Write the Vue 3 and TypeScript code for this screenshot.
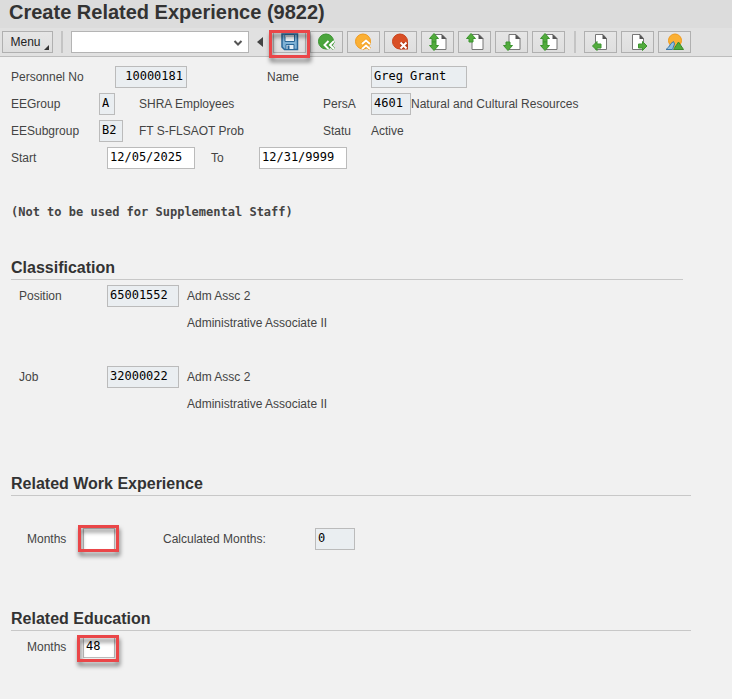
<script setup lang="ts">
import { ref } from 'vue'

interface Tool {
  id: string
  label: string
}

const navTools: Tool[] = [
  { id: 'back', label: 'Back' },
  { id: 'exit', label: 'Exit' },
  { id: 'cancel', label: 'Cancel' },
  { id: 'first', label: 'First page' },
  { id: 'prev', label: 'Previous page' },
  { id: 'next', label: 'Next page' },
  { id: 'last', label: 'Last page' },
]
const recordTools: Tool[] = [
  { id: 'pagePrev', label: 'Previous record' },
  { id: 'pageNext', label: 'Next record' },
  { id: 'overview', label: 'Overview' },
]

const command = ref('')
const startDate = ref('12/05/2025')
const endDate = ref('12/31/9999')
const workMonths = ref('')
const educationMonths = ref('48')

const upArrow = 'M6 1.500 L10.500 6.500 H8 V10 H4 V6.500 H1.500 Z'
const downArrow = 'M6 18.500 L10.500 13.500 H8 V10 H4 V13.500 H1.500 Z'
</script>

<template>
  <div class="screen">
    <header>
      <h1>Create Related Experience (9822)</h1>
      <div class="toolbar">
        <button class="menu" type="button">Menu</button>
        <span class="divider"></span>
        <div class="command">
          <select v-model="command" aria-label="Command">
            <option value=""></option>
          </select>
          <svg class="chevron" viewBox="0 0 10 8"><path d="M1.500 2 L5 5.500 L8.500 2" /></svg>
        </div>
        <button class="collapse" type="button" aria-label="Hide command field">
          <svg viewBox="0 0 6 10"><path d="M6 0 V10 L0 5 Z" /></svg>
        </button>
        <div class="tools">
          <span class="marked marked-tool">
            <button class="tool" type="button" aria-label="Save">
              <svg viewBox="0 0 20 20">
                <path d="M2 2 H17.500 V17.500 H4.500 L2 15 Z" fill="#7fb2d6" stroke="#2a6798" stroke-width="1.500" />
                <path d="M5 2.500 H14.500 V9.500 H5 Z" fill="#f2f7fa" stroke="#2a6798" />
                <path d="M5.500 3 H14 V5 H5.500 Z" fill="#c3ccd3" />
                <path d="M6 12.500 H14 V17.500 H6 Z" fill="#e6f0f7" stroke="#2a6798" />
                <path d="M7.500 13.500 H9.500 V17 H7.500 Z" fill="#2a6798" />
              </svg>
            </button>
          </span>
          <button v-for="tool in navTools" :key="tool.id" class="tool" type="button" :aria-label="tool.label">
            <svg viewBox="0 0 20 20">
              <template v-if="tool.id === 'back'">
                <circle cx="9" cy="9.500" r="7.500" fill="#4aa53c" stroke="#3a9330" />
                <path d="M11.500 9 L7.500 13 L11.500 17 M17 9 L13 13 L17 17" class="halo-green" />
                <path d="M11.500 9 L7.500 13 L11.500 17 M17 9 L13 13 L17 17" class="mark" />
              </template>
              <template v-else-if="tool.id === 'exit'">
                <circle cx="9" cy="9.500" r="7.500" fill="#fbb034" stroke="#f09a1a" />
                <path d="M8 12 L12 8.500 L16 12 M8 17 L12 13.500 L16 17" class="halo-orange" />
                <path d="M8 12 L12 8.500 L16 12 M8 17 L12 13.500 L16 17" class="mark" />
              </template>
              <template v-else-if="tool.id === 'cancel'">
                <circle cx="9" cy="9.500" r="7.500" fill="#d94f25" stroke="#c94018" />
                <path d="M9 10 H17 V17.500 H9 Z" fill="#b93b18" />
                <path d="M9.500 10.500 L15.500 16.500 M15.500 10.500 L9.500 16.500" class="mark" />
              </template>
              <template v-else>
                <path d="M7 2.500 H14 L18 6.500 V17.500 H7 Z" class="page" />
                <path d="M13.500 2 V7 H18.500 Z" class="fold" />
                <path v-if="tool.id !== 'next'" :d="upArrow" class="arrow" />
                <path v-if="tool.id !== 'prev'" :d="downArrow" class="arrow" />
              </template>
            </svg>
          </button>
          <span class="divider tool-divider"></span>
          <button v-for="tool in recordTools" :key="tool.id" class="tool" type="button" :aria-label="tool.label">
            <svg viewBox="0 0 20 20">
              <template v-if="tool.id === 'overview'">
                <circle cx="10" cy="8.500" r="6.500" fill="#fbb034" stroke="#f09a1a" />
                <path d="M1 17.500 Q4 15.500 6 11.500 L8.500 9.500 L9.500 12 L7.500 17.500 Z" fill="#8fc0e4" stroke="#3c78a8" />
                <path d="M8.500 17.500 L13.500 10 L18.500 17.500 Z" fill="#4eab38" stroke="#3a8a2c" />
              </template>
              <template v-else>
                <path d="M4.500 2.500 H12 L15.500 6.500 V17.500 H4.500 Z" class="page" />
                <path d="M11.500 2 V7 H16 Z" class="fold" />
                <path v-if="tool.id === 'pagePrev'" d="M1.500 14 L6 9.500 V12 H10 V16 H6 V18.500 Z" class="arrow" />
                <path v-else d="M19 14 L14.500 9.500 V12 H10.500 V16 H14.500 V18.500 Z" class="arrow" />
              </template>
            </svg>
          </button>
        </div>
      </div>
    </header>

    <main>
      <div class="row person">
        <label for="pernr">Personnel No</label>
        <input id="pernr" class="w72 right" value="10000181" readonly />
        <label for="name">Name</label>
        <input id="name" class="w96" value="Greg Grant" readonly />
      </div>
      <div class="row group">
        <label for="eegroup">EEGroup</label>
        <input id="eegroup" class="w16" value="A" readonly />
        <span>SHRA Employees</span>
        <label for="persa">PersA</label>
        <input id="persa" class="w40" value="4601" readonly />
        <span>Natural and Cultural Resources</span>
      </div>
      <div class="row group">
        <label for="eesub">EESubgroup</label>
        <input id="eesub" class="w24" value="B2" readonly />
        <span>FT S-FLSAOT Prob</span>
        <span>Statu</span>
        <span>Active</span>
      </div>
      <div class="row dates">
        <label for="start">Start</label>
        <input id="start" v-model="startDate" class="w88" />
        <label for="end">To</label>
        <input id="end" v-model="endDate" class="w88" />
      </div>

      <p class="note">(Not to be used for Supplemental Staff)</p>

      <section class="classification">
        <h2>Classification</h2>
        <div class="row coded">
          <label for="position">Position</label>
          <input id="position" class="w72" value="65001552" readonly />
          <span>Adm Assc 2</span>
          <span class="detail">Administrative Associate II</span>
        </div>
        <div class="row coded">
          <label for="job">Job</label>
          <input id="job" class="w72" value="32000022" readonly />
          <span>Adm Assc 2</span>
          <span class="detail">Administrative Associate II</span>
        </div>
      </section>

      <section class="experience">
        <h2>Related Work Experience</h2>
        <div class="row months">
          <label for="work">Months</label>
          <span class="marked"><input id="work" v-model="workMonths" class="w32" /></span>
          <label for="calculated">Calculated Months:</label>
          <input id="calculated" class="w40" value="0" readonly />
        </div>
      </section>

      <section>
        <h2>Related Education</h2>
        <div class="row months">
          <label for="education">Months</label>
          <span class="marked marked-low"><input id="education" v-model="educationMonths" class="w32" /></span>
        </div>
      </section>
    </main>
  </div>
</template>

<style>
body {
  margin: 0;
  background: #f1f1f1;
}
</style>

<style scoped>
.screen {
  min-height: 100vh;
  font-family: "Liberation Sans", Arial, sans-serif;
  font-size: 12px;
  color: #444;
  background: #f1f1f1;
}

.screen * {
  box-sizing: border-box;
}

header {
  background: #e1e1e1;
  border-bottom: 1px solid #bdbdbd;
}

h1 {
  margin: 0;
  padding: 0 9px;
  font-size: 20px;
  line-height: 24px;
  height: 28px;
  color: #333;
  background: #dcdcdc;
}

.toolbar {
  display: flex;
  align-items: center;
  height: 28px;
  padding: 0 2px;
}

button {
  padding: 0;
  font-family: inherit;
  border: 1px solid #b0b0b0;
  border-radius: 0;
  background: linear-gradient(#e6e6e6, #dedede);
}

.menu {
  position: relative;
  width: 51px;
  height: 22px;
  padding-right: 4px;
  font-size: 12px;
  color: #222;
}

.menu::after {
  content: "";
  position: absolute;
  right: 3px;
  bottom: 2px;
  border-left: 5px solid transparent;
  border-bottom: 5px solid #333;
}

.divider {
  width: 2px;
  height: 22px;
  margin: 0 8px;
  background: #c4c4c4;
}

.command {
  position: relative;
  width: 178px;
  height: 22px;
}

select {
  width: 100%;
  height: 22px;
  border: 1px solid #b4b4b4;
  border-radius: 0;
  background: #fff;
  appearance: none;
}

.chevron {
  position: absolute;
  right: 6px;
  top: 8px;
  width: 10px;
  height: 8px;
  fill: none;
  stroke: #555;
  stroke-width: 2;
  pointer-events: none;
}

.collapse {
  width: 24px;
  height: 22px;
  padding-right: 2px;
  border: 0;
  background: none;
}

.collapse svg {
  display: block;
  width: 6px;
  height: 10px;
  margin: 0 auto;
  fill: #444;
}

.tools {
  display: flex;
  align-items: center;
  gap: 4px;
}

.tool {
  display: flex;
  align-items: center;
  justify-content: center;
  width: 33px;
  height: 22px;
}

.tool svg {
  width: 20px;
  height: 20px;
  flex: none;
}

.tool-divider {
  margin: 0 4px 0 5px;
}

.mark {
  fill: none;
  stroke: #fff;
  stroke-width: 2;
}

.halo-green {
  fill: none;
  stroke: #3a9330;
  stroke-width: 3;
}

.halo-orange {
  fill: none;
  stroke: #f09a1a;
  stroke-width: 3;
}

.page {
  fill: #fff;
  stroke: #777;
}

.fold {
  fill: #555;
}

.arrow {
  fill: #52ab3c;
  stroke: #3d9530;
  stroke-width: 1;
}

main {
  padding: 7px 41px 24px 11px;
}

.row {
  display: grid;
  align-items: start;
  height: 27px;
  padding: 2px 0 3px;
  line-height: 22px;
  white-space: nowrap;
}

.person {
  grid-template-columns: 104px 152px 104px 1fr;
}

.group {
  grid-template-columns: 88px 40px 184px 48px 40px 1fr;
}

.dates {
  grid-template-columns: 96px 104px 48px 1fr;
}

.coded {
  grid-template-columns: 88px 80px 1fr;
  grid-auto-rows: 27px;
  height: 81px;
  padding-left: 8px;
}

.coded .detail {
  grid-column: 3;
}

.months {
  grid-template-columns: 56px 80px 152px 1fr;
  padding-left: 16px;
}

input {
  display: block;
  height: 22px;
  padding: 0 3px 2px 2px;
  border: 1px solid #bbb;
  border-radius: 0;
  font-family: "DejaVu Sans Mono", "Liberation Mono", monospace;
  font-size: 12px;
  color: #000;
  background: #fff;
}

input[readonly] {
  background: #eaeef1;
}

.right {
  text-align: right;
}

.w16 { width: 16px; }
.w24 { width: 24px; }
.w32 { width: 32px; }
.w40 { width: 40px; }
.w72 { width: 72px; }
.w88 { width: 88px; }
.w96 { width: 96px; }

.marked {
  position: relative;
  justify-self: start;
}

.marked::after {
  content: "";
  position: absolute;
  inset: -3px -4px -2px -5px;
  border: 3px solid #ea4648;
  filter: drop-shadow(1px 4px 2px rgba(0, 0, 0, 0.5));
  pointer-events: none;
}

.marked-low::after {
  inset: -1px -4px -4px -6px;
}

.marked-tool::after {
  inset: -1px -4px -5px -4px;
}

.note {
  margin: 27px 0 30px;
  font-family: "DejaVu Sans Mono", "Liberation Mono", monospace;
  font-weight: bold;
  line-height: 27px;
}

h2 {
  height: 24px;
  margin: 0 0 3px;
  border-bottom: 1px solid #c8c8c8;
  font-size: 16px;
  line-height: 23px;
  color: #333;
}

.classification {
  margin-right: 8px;
  margin-bottom: 27px;
}

.experience h2 {
  margin-bottom: 30px;
}

.experience {
  margin-bottom: 54px;
}
</style>
